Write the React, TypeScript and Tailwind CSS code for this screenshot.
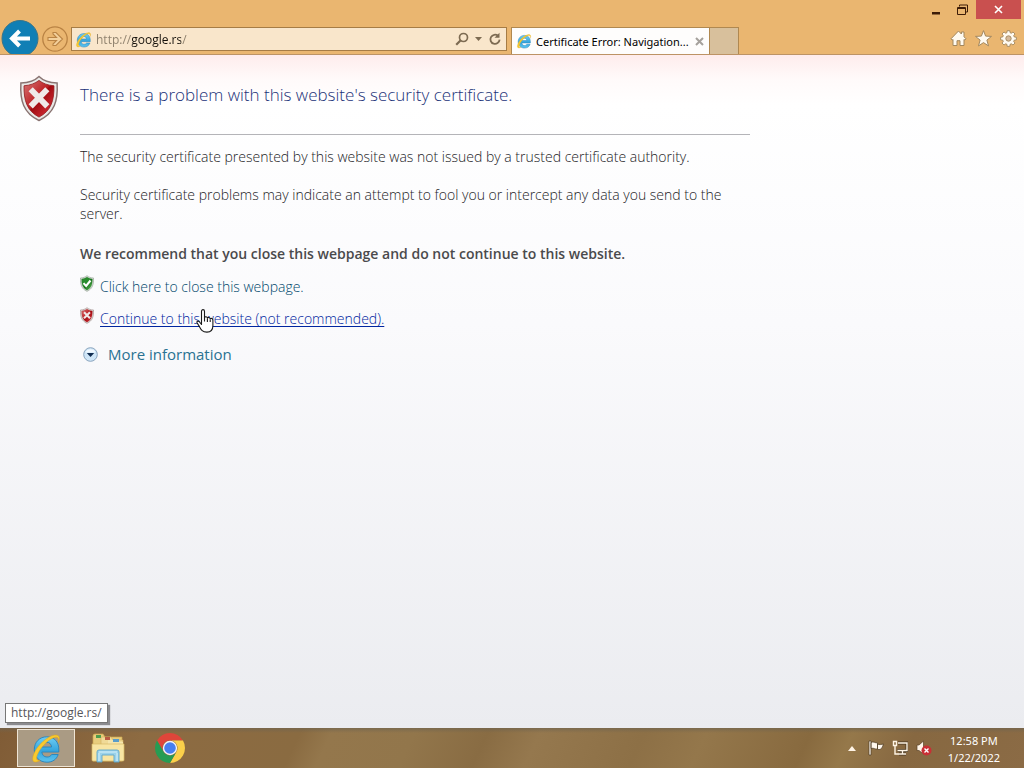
import React from "react";

function IeLogo({ className }: { className: string }) {
  return (
    <svg viewBox="0 0 32 32" className={className} fill="none" aria-hidden="true">
      <defs>
        <linearGradient id="ieBlue" x1="0" y1="0" x2="0" y2="1">
          <stop offset="0" stopColor="#6fcdf3" />
          <stop offset="0.55" stopColor="#35a5dd" />
          <stop offset="1" stopColor="#5cc4f0" />
        </linearGradient>
      </defs>
      <path d="M28.8 20H11.8c.3 3 2.200 5 5.200 5 2.200 0 3.600-.8 4.700-2.500h6.500C26.500 27.600 22.400 30.200 17 30.200 9.500 30.200 4.300 25 4.300 17.600S9.600 4.800 16.800 4.800c7.600 0 12.200 5.200 12 13.200zM11.900 15h9.700c-.4-3-2.100-4.700-4.800-4.700S12.300 12 11.900 15z" fill="url(#ieBlue)" stroke="#2583bd" strokeWidth="0.900" />
      <path d="M28.500 10.500c2-4.600.8-8.100-3.800-7.400C17 4.200 7.600 13.300 4.100 21.200c-2.300 5.200-1.900 9.400 2.100 8.800 1.300-.2 2.700-.9 4-1.800-3.200 1-4.500-1-2.900-5.200C10 16 17.300 8.200 23.500 5.700c4.200-1.600 5.900.4 5 4.800z" fill="#f8ca2f" stroke="#dca21d" strokeWidth="0.500" />
    </svg>
  );
}

function BackArrow() {
  return (
    <svg viewBox="0 0 38 34" className="h-[34px] w-[38px]" aria-hidden="true">
      <circle cx="19" cy="18.500" r="18" fill="#107fb5" stroke="#3a7488" strokeWidth="1" />
      <path d="M29 18.500H12M18.500 11L11 18.500l7.500 7.500" fill="none" stroke="#fff" strokeWidth="4" />
    </svg>
  );
}

function ForwardArrow() {
  return (
    <svg viewBox="0 0 26 26" className="size-[26px]" fill="none" stroke="#b98344" aria-hidden="true">
      <circle cx="13" cy="13" r="12.200" strokeWidth="1.300" />
      <path d="M6 11.500h8.500L11 8V6.500h3l6.500 6.500-6.500 6.500h-3V18l3.500-3.500H6z" fill="#f3d09c" strokeWidth="1.100" />
    </svg>
  );
}

function Shield({ kind, className }: { kind: "bad" | "good"; className: string }) {
  const good = kind === "good";
  return (
    <svg viewBox="0 0 40 48" className={className} aria-hidden="true">
      <defs>
        <linearGradient id={"shield-" + kind} x1="0" y1="0" x2="1" y2="1">
          <stop offset="0" stopColor={good ? "#2e8a32" : "#d77575"} />
          <stop offset="0.480" stopColor={good ? "#278c2b" : "#bd2024"} />
          <stop offset="0.520" stopColor={good ? "#166e1b" : "#a00a10"} />
          <stop offset="1" stopColor={good ? "#6ccb60" : "#e43a44"} />
        </linearGradient>
      </defs>
      <path d="M20 1.500C24 5.500 31 8 38.500 8.200 39.500 26 36 39 20 46.500 4 39 .5 26 1.500 8.200 9 8 16 5.500 20 1.500z" fill="#e9e9e7" stroke={good ? "#7b8b7b" : "#8a7472"} strokeWidth="1.500" />
      <path d="M20 5.500c4 3.200 9 5 15.300 5.500C35.500 26 32.500 36.500 20 43 7.500 36.500 4.500 26 4.700 11 11 10.500 16 8.700 20 5.500z" fill={"url(#shield-" + kind + ")"} stroke={good ? "#14691a" : "#8e1417"} strokeWidth="0.800" />
      {good ? (
        <path d="M10 23l7.500 8L30 15.500" fill="none" stroke="#fff" strokeWidth="6" />
      ) : (
        <path d="M11.500 14.500l17 17.500M28.500 14.500l-17 17.500" fill="none" stroke="#f0e9e8" strokeWidth="6" />
      )}
    </svg>
  );
}

function HandPointer() {
  return (
    <svg viewBox="0 0 18 24" className="h-6 w-[18px]" fill="#fff" stroke="#1a1a1a" strokeWidth="1.100" strokeLinejoin="round" aria-hidden="true">
      <path d="M5.500 15.500V2.500c0-2.500 3-2.500 3 0v6.300c.4-1.500 2.700-1.300 2.900.3.700-1.200 2.600-.8 2.800.8.900-1 2.700-.4 2.700 1.300v5.300c0 4-2.300 6.600-6 6.600-4.500 0-5.600-2-7.300-5.200L1.200 14c-.8-1.500.8-2.500 2-1.500z" />
      <path d="M8.500 8.500v4M11.400 9.500v3.500M14.200 10.500V13" fill="none" />
    </svg>
  );
}

function Header() {
  return (
    <header className="flex h-[55px] shrink-0 border-b border-[#bd9365] bg-[#eab670] pr-0.5">
      <div className="flex w-1/2 min-w-0 items-end pr-1">
        <button aria-label="Back" className="ml-px shrink-0">
          <BackArrow />
        </button>
        <button aria-label="Forward" className="mb-0.5 ml-[3px] shrink-0">
          <ForwardArrow />
        </button>
        <div className="mb-[3px] ml-[3px] flex h-6 min-w-0 flex-1 items-center border border-[#a67c45] bg-[#f9e6cb] pr-1">
          <IeLogo className="ml-[3px] size-[17px] shrink-0" />
          <input
            aria-label="Address"
            defaultValue="http://google.rs/"
            className="ml-1 min-w-0 flex-1 bg-[linear-gradient(90deg,#8c7f6b_36px,#15110b_36px,#15110b_85px,#8c7f6b_85px)] bg-clip-text pt-0.5 text-[12px] leading-5 text-transparent outline-none"
          />
          <button aria-label="Search">
            <svg viewBox="0 0 14 14" className="size-3.5" fill="none" stroke="#7d6b52" aria-hidden="true">
              <circle cx="8.500" cy="5.500" r="4" strokeWidth="1.700" />
              <path d="M5.700 8.300L1.200 12.800" strokeWidth="2.200" />
            </svg>
          </button>
          <button aria-label="Show address bar autocomplete" className="ml-1.5">
            <svg viewBox="0 0 7 4" className="h-1 w-[7px]" aria-hidden="true">
              <path d="M0 0h7L3.500 4z" fill="#7d6b52" />
            </svg>
          </button>
          <button aria-label="Refresh" className="ml-1.5">
            <svg viewBox="0 0 14 14" className="size-3.5" fill="none" stroke="#7d6b52" strokeWidth="1.800" aria-hidden="true">
              <path d="M10 3.800A4.600 4.600 0 1 0 11.600 7.700" />
              <path d="M11.500.8v5h-5z" fill="#7d6b52" stroke="none" />
            </svg>
          </button>
        </div>
      </div>
      <div className="flex w-1/2 min-w-0 items-end justify-between">
        <div className="flex h-[27px]">
          <div className="flex w-[199px] items-center border border-b-0 border-[#b08850] bg-[#fefdfc] pr-[5px] pl-1">
            <IeLogo className="size-4 shrink-0" />
            <span className="ml-1 flex-1 pt-0.5 font-['Noto_Sans',sans-serif] text-[11px] leading-5 whitespace-nowrap text-black">
              Certificate Error: Navigation...
            </span>
            <button aria-label="Close tab">
              <svg viewBox="0 0 9 9" className="size-[9px]" stroke="#a5a19c" strokeWidth="2" aria-hidden="true">
                <path d="M1 1l7 7M8 1L1 8" />
              </svg>
            </button>
          </div>
          <button aria-label="New tab" className="w-[29px] border border-b-0 border-l-0 border-[#b08850] bg-[#d8c09c]" />
        </div>
        <div className="flex h-full flex-col items-end justify-between pr-px">
          <div className="flex h-[19px] items-center">
            <button aria-label="Minimize">
              <svg viewBox="0 0 10 10" className="size-2.5" aria-hidden="true">
                <path d="M1 7h8v2.500H1z" fill="#3d1c08" />
              </svg>
            </button>
            <button aria-label="Restore" className="mr-2 ml-4">
              <svg viewBox="0 0 11 11" className="size-[11px]" fill="none" stroke="#3d1c08" aria-hidden="true">
                <path d="M2.500 2.500V1h8v7H9" />
                <path d="M.5 3.500h8v7h-8zM.5 4.500h8" />
              </svg>
            </button>
            <button aria-label="Close" className="flex h-[19px] w-[45px] items-center justify-center bg-[#c9504f]">
              <svg viewBox="0 0 9 9" className="size-[9px]" stroke="#fff" strokeWidth="1.600" aria-hidden="true">
                <path d="M1 1l7 7M8 1L1 8" />
              </svg>
            </button>
          </div>
          <div className="mr-1 mb-[7px] flex gap-2">
            <button aria-label="Home">
              <svg viewBox="0 0 17 17" className="size-[17px]" fill="#fffaf0" stroke="#a2875e" strokeWidth="1" strokeLinejoin="round" aria-hidden="true">
                <path d="M8.500 1L1 8.800l1.200 1.300.8-.7v6.100h4v-4.800h3v4.800h4V9.400l.8.700L16 8.800l-2-2V2h-2.600v2z" />
              </svg>
            </button>
            <button aria-label="Favorites">
              <svg viewBox="0 0 17 17" className="size-[17px]" fill="#fffaf0" stroke="#a2875e" strokeWidth="1" strokeLinejoin="round" aria-hidden="true">
                <path d="M8.500.6l2.100 5.500 5.900.3-4.600 3.700 1.600 5.800-5-3.300-5 3.300 1.600-5.800L.5 6.400l5.900-.3z" />
              </svg>
            </button>
            <button aria-label="Tools">
              <svg viewBox="0 0 17 17" className="size-[17px]" fill="#fffaf0" stroke="#a2875e" strokeWidth="0.900" strokeLinejoin="round" aria-hidden="true">
                <path d="M7.200.7h2.600l.3 2 1.200.5 1.700-1.200L15 4l-1.300 1.600.5 1.300 2.200.4v2.500l-2.200.4-.5 1.200L15 13l-2 2-1.700-1.200-1.200.5-.3 2.100H7.200l-.3-2.100-1.200-.5L4 15l-2-2 1.300-1.600-.5-1.200-2.200-.4V7.300l2.200-.4.500-1.300L2 4l2-2 1.700 1.200 1.200-.5z" />
                <circle cx="8.500" cy="8.500" r="2.700" fill="#d5b99a" />
              </svg>
            </button>
          </div>
        </div>
      </div>
    </header>
  );
}

function ErrorPage() {
  return (
    <main className="relative flex-1 bg-[linear-gradient(180deg,#feecec_0px,#fffafa_24px,#ffffff_50px,#fafafc_40%,#ebecf0_100%)] pt-5 pl-[19px] text-[14px] leading-[19px] font-light text-[#1c1c1e]">
      <div className="flex items-start gap-[21px]">
        <Shield kind="bad" className="h-[47px] w-10 shrink-0" />
        <div className="w-full max-w-[670px]">
          <h1 className="border-b border-[#b4b4b8] pt-2 pb-[27px] text-[17px] leading-6 text-[#1b3278]">
            There is a problem with this website's security certificate.
          </h1>
          <p className="mt-3">The security certificate presented by this website was not issued by a trusted certificate authority.</p>
          <p className="mt-[19px]">
            Security certificate problems may indicate an attempt to fool you or intercept any data you send to the server.
          </p>
          <p className="mt-[21px] font-semibold text-[#4a4a4c]">We recommend that you close this webpage and do not continue to this website.</p>
          <div className="mt-3 flex items-start gap-1.5">
            <Shield kind="good" className="h-[17px] w-3.5" />
            <a href="#close" className="mt-0.5 text-[#00476b]">Click here to close this webpage.</a>
          </div>
          <div className="mt-[11px] flex items-start gap-1.5">
            <Shield kind="bad" className="h-[17px] w-3.5" />
            <a href="http://google.rs/" className="relative mt-0.5 text-[#0025a0] underline underline-offset-2">
              Continue to this website (not recommended).
              <span className="absolute top-0 left-24">
                <HandPointer />
              </span>
            </a>
          </div>
          <button className="mt-4 ml-[3px] flex items-center gap-2.5 text-[15px] leading-5 font-normal text-[#2a7292]">
            <svg viewBox="0 0 15 15" className="size-[15px]" aria-hidden="true">
              <circle cx="7.500" cy="7.500" r="6.800" fill="#cfe6f8" stroke="#8aa4bd" />
              <path d="M2.500 5.500a5.500 5.500 0 0 1 10 0z" fill="#f2f9ff" />
              <path d="M3.800 6h7.400L7.500 10z" fill="#102c50" />
            </svg>
            More information
          </button>
        </div>
      </div>
      <div className="absolute bottom-[5px] left-[5px] border border-[#777] bg-white px-[5px] text-[12px] leading-[18px] font-normal text-[#56565a] shadow-[2px_2px_1px_#8b8b8f]">
        http://google.rs/
      </div>
    </main>
  );
}

function ExplorerIcon() {
  return (
    <svg viewBox="0 0 34 30" className="h-[30px] w-[34px]" aria-hidden="true">
      <path d="M2 28V3q0-2 2-2h8l2 3h17v24z" fill="#e8cd7d" stroke="#cda84f" strokeWidth="0.700" />
      <path d="M5 2h5v3H5z" fill="#4e9c4d" />
      <path d="M10 27V5q0-1 1-1h9l2 3h10v20z" fill="#f0da97" stroke="#d0ac5b" strokeWidth="0.600" />
      <path d="M14 4h5v3h-5z" fill="#b85a42" />
      <path d="M17 26V7h8l2 2h5v17z" fill="#f5e5ac" />
      <path d="M22 6h6v3h-6z" fill="#5a9dc9" />
      <path d="M1 11h32v16q0 1-1 1H2q-1 0-1-1z" fill="#f8e5a3" stroke="#d9b966" strokeWidth="0.700" />
      <path d="M6 29V19q0-2 2-2h18q2 0 2 2v10h-5v-7H11v7z" fill="#9bd2e9" stroke="#5fa6ca" strokeWidth="0.900" />
      <path d="M8 19h18M8 20v8M26 20v8" stroke="#d5f1fb" strokeWidth="1" />
    </svg>
  );
}

function ChromeIcon() {
  return (
    <svg viewBox="2 2 44 44" className="size-[30px]" aria-hidden="true">
      <path d="M24 13h19.050A22 22 0 0 0 4.950 13l9.520 16.500A11 11 0 0 1 24 13z" fill="#df453a" />
      <path d="M33.530 29.500L24 46A22 22 0 0 0 43.050 13H24a11 11 0 0 1 9.530 16.500z" fill="#fbd04a" />
      <path d="M14.470 29.500L4.950 13A22 22 0 0 0 24 46l9.530-16.500a11 11 0 0 1-19.060 0z" fill="#269c53" />
      <circle cx="24" cy="24" r="10.500" fill="#f4f4f4" />
      <circle cx="24" cy="24" r="8.500" fill="#467ff0" />
    </svg>
  );
}

function Taskbar() {
  return (
    <footer className="flex h-10 shrink-0 items-center justify-between bg-[#8d7047] bg-[linear-gradient(180deg,#6f6450aa_0px,transparent_5px),linear-gradient(115deg,#805c36_0%,#8d6b42_14%,#8a6b41_29%,#94774c_32%,#92764b_40%,#896c43_47%,#95784e_52%,#8d7046_62%,#94774b_68%,#886a3f_78%,#95784a_82%,#876841_88%,#8b6b45_100%)] pr-6 pl-[17px]">
      <div className="flex gap-1">
        <button aria-label="Internet Explorer" className="flex h-[38px] w-[58px] items-center justify-center border border-[#efe5d5] bg-[#aa9b84]">
          <IeLogo className="size-8" />
        </button>
        <button aria-label="File Explorer" className="flex h-[38px] w-[58px] items-center justify-center">
          <ExplorerIcon />
        </button>
        <button aria-label="Google Chrome" className="flex h-[38px] w-[58px] items-center justify-center">
          <ChromeIcon />
        </button>
      </div>
      <div className="flex items-center text-white">
        <button aria-label="Show hidden icons">
          <svg viewBox="0 0 8 5" className="h-[5px] w-2" aria-hidden="true">
            <path d="M0 5L4 0l4 5z" fill="#fff4e6" />
          </svg>
        </button>
        <button aria-label="Action Center" className="ml-3">
          <svg viewBox="0 0 16 16" className="size-4" fill="#fff8ee" stroke="#4a3922" strokeWidth="0.700" aria-hidden="true">
            <path d="M1 1h2v14H1zM3 2.500c3-1.500 4 .8 6.500.3V9C7 9.500 6 7.500 3 8.500zM9.500 4c2 1 3.500.5 6 0-1 2-.7 4-3.500 5.500H9.500z" />
          </svg>
        </button>
        <button aria-label="Network" className="ml-2">
          <svg viewBox="0 0 16 16" className="size-4" fill="none" stroke="#fff5e5" strokeWidth="1.400" aria-hidden="true">
            <path d="M6 3h9v7.500H5.500M7 14h7M10.500 11v3" stroke="#493721" strokeWidth="3" />
            <path d="M6 3h9v7.500H5.500M7 14h7M10.500 11v3M1.500 1.500h3v4h-3zM3 5.500V14h4" />
          </svg>
        </button>
        <button aria-label="Volume muted" className="ml-2">
          <svg viewBox="0 0 16 16" className="size-4" aria-hidden="true">
            <path d="M1 5h2l4.500-4v13L3 10.500H1z" fill="#fff5ea" stroke="#5a4226" strokeWidth="0.700" />
            <circle cx="10.500" cy="10.500" r="5" fill="#c92f35" />
            <path d="M8.500 8.500l4 4M12.500 8.500l-4 4" stroke="#fff" strokeWidth="1.400" />
          </svg>
        </button>
        <time dateTime="2022-01-22T12:58" className="ml-4 flex flex-col pt-0.5 text-center font-['Noto_Sans',sans-serif] text-[11px] leading-[17px]">
          <span>12:58 PM</span>
          <span>1/22/2022</span>
        </time>
      </div>
    </footer>
  );
}

export default function App() {
  return (
    <div className="flex min-h-screen flex-col overflow-hidden font-['Open_Sans','Noto_Sans',sans-serif]">
      <Header />
      <ErrorPage />
      <Taskbar />
    </div>
  );
}
